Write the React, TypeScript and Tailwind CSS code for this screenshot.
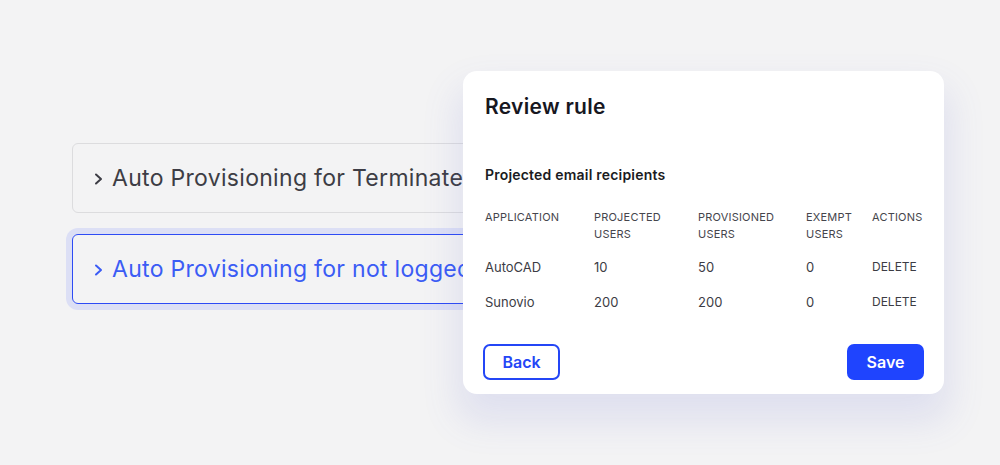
import React from "react";

const F = { fontFamily: "Inter, 'Open Sans', sans-serif" };

function Chevron({ className }: { className?: string }) {
  return (
    <svg className={className} width="12" height="14" viewBox="0 0 12 14" fill="none">
      <path d="M3 2.5 L8 7 L3 11.5" stroke="currentColor" strokeWidth="2" strokeLinecap="round" strokeLinejoin="round" />
    </svg>
  );
}

const rows = [
  { app: "AutoCAD", proj: "10", prov: "50", ex: "0" },
  { app: "Sunovio", proj: "200", prov: "200", ex: "0" },
];

export default function App() {
  return (
    <div className="relative w-[1000px] h-[465px] overflow-hidden bg-[#f3f3f4]" style={F}>
      <div className="flex flex-col gap-[21px] pt-[143px] pl-[72px]">
        <div className="w-[400px] h-[70px] rounded-[6px] border border-[#dcdcde] flex items-center pl-[20px] gap-[7px] text-[#3d3d45] overflow-hidden whitespace-nowrap">
          <Chevron className="mt-[2px] shrink-0" />
          <span className="text-[23px] tracking-[0.3px]">Auto Provisioning for Terminated</span>
        </div>
        <div className="w-[400px] h-[70px] rounded-[6px] border border-[#2d4bf5] ring-[6px] ring-[#dcdff5] flex items-center pl-[20px] gap-[7px] text-[#3b5cf5] overflow-hidden whitespace-nowrap">
          <Chevron className="mt-[2px] shrink-0" />
          <span className="text-[23px] tracking-[0.3px]">Auto Provisioning for not logged</span>
        </div>
      </div>

      <div className="absolute left-[463px] top-[71px] w-[481px] h-[323px] rounded-[14px] bg-white shadow-[0_22px_36px_6px_rgba(90,100,210,0.13)] pl-[22px] pr-[20px] pt-[22px] flex flex-col">
        <h2 className="text-[21px] font-semibold text-[#17171f] leading-[28px] tracking-[0.3px]">Review rule</h2>
        <h3 className="mt-[44px] text-[14px] font-semibold text-[#1b1b22] leading-[20px] tracking-[0.2px]">Projected email recipients</h3>
        <div className="mt-[24px] grid grid-cols-[109px_104px_108px_66px_1fr] text-[11px] text-[#45454c] leading-[17px] tracking-[0.2px]">
          <div>APPLICATION</div>
          <div>PROJECTED<br />USERS</div>
          <div>PROVISIONED<br />USERS</div>
          <div>EXEMPT<br />USERS</div>
          <div>ACTIONS</div>
        </div>
        <div className="mt-[14px] flex flex-col gap-[15px]">
          {rows.map((r) => (
            <div key={r.app} className="grid grid-cols-[109px_104px_108px_66px_1fr] text-[13px] text-[#3c3c44] leading-[20px]">
              <div>{r.app}</div>
              <div>{r.proj}</div>
              <div>{r.prov}</div>
              <div>{r.ex}</div>
              <div className="text-[12px]">DELETE</div>
            </div>
          ))}
        </div>
        <div className="mt-[32px] flex justify-between">
          <button className="w-[77px] h-[36px] -ml-[2px] rounded-[7px] border-2 border-[#2446f6] text-[#2446f6] text-[16px] font-semibold">Back</button>
          <button className="w-[77px] h-[36px] rounded-[7px] bg-[#1f44fe] text-white text-[16px] font-semibold">Save</button>
        </div>
      </div>
    </div>
  );
}
